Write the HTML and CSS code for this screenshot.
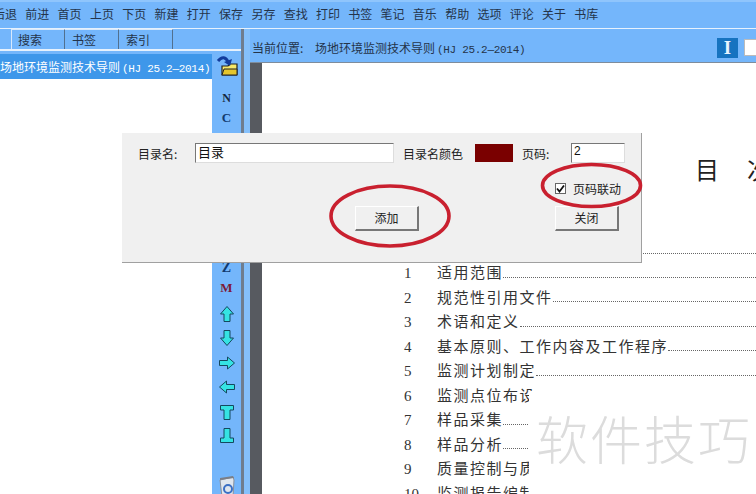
FILE: index.html
```html
<!DOCTYPE html>
<html lang="zh-CN">
<head>
<meta charset="utf-8">
<title>书签编辑</title>
<link rel="stylesheet" href="styles.css">
</head>
<body>
<div class="app">
  <nav class="toolbar">
    <span class="tool">后退</span><span class="tool">前进</span><span class="tool">首页</span><span class="tool">上页</span><span class="tool">下页</span><span class="tool">新建</span><span class="tool">打开</span><span class="tool">保存</span><span class="tool">另存</span><span class="tool">查找</span><span class="tool">打印</span><span class="tool">书签</span><span class="tool">笔记</span><span class="tool">音乐</span><span class="tool">帮助</span><span class="tool">选项</span><span class="tool">评论</span><span class="tool">关于</span><span class="tool">书库</span>
  </nav>
  <div class="main">
    <aside class="left">
      <div class="tabs">
        <span class="tab">搜索</span><span class="tab">书签</span><span class="tab">索引</span>
      </div>
      <div class="left-body">
        <div class="list">
          <div class="list-item">场地环境监测技术导则<span class="mono">(HJ 25.2—2014)</span></div>
        </div>
        <div class="side">
          <svg class="ico-open" width="22" height="22" viewBox="0 0 22 22"><path d="M6 11h6l2-2h7v11H6z" fill="#f6e86a" stroke="#222" stroke-width="1.2"/><path d="M6 20l2-6h13v6z" fill="#e4c52c" stroke="#222" stroke-width="1"/><path d="M2 6c4-5 8-4 10 1" fill="none" stroke="#123c9c" stroke-width="3"/><path d="M8 7l6 4 2-7z" fill="#123c9c"/></svg>
          <span class="letter letter-n">N</span>
          <span class="letter">C</span>
          <span class="letter letter-z">Z</span>
          <span class="letter letter-m">M</span>
          <svg class="arrow arrow-first" width="18" height="18" viewBox="0 0 18 18"><path d="M9 1.500l6.500 7.500h-3.500v7.500H6V9H2.500z" fill="#35e3e3" stroke="#14495f"/></svg>
          <svg class="arrow" width="18" height="18" viewBox="0 0 18 18"><path d="M9 16.500l6.500-7.500h-3.500V1.500H6V9H2.500z" fill="#35e3e3" stroke="#14495f"/></svg>
          <svg class="arrow" width="18" height="18" viewBox="0 0 18 18"><path d="M16.500 9L9.500 3v3.500h-8v5h8V15z" fill="#35e3e3" stroke="#14495f"/></svg>
          <svg class="arrow" width="18" height="18" viewBox="0 0 18 18"><path d="M1.500 9l7-6v3.500h8v5h-8V15z" fill="#35e3e3" stroke="#14495f"/></svg>
          <svg class="arrow" width="18" height="18" viewBox="0 0 18 18"><path d="M2.500 2.500h13v4.500H12v9.500H6V7H2.500z" fill="#35e3e3" stroke="#14495f"/></svg>
          <svg class="arrow" width="18" height="18" viewBox="0 0 18 18"><path d="M2.500 15.500h13V11H12V1.500H6V11H2.500z" fill="#35e3e3" stroke="#14495f"/></svg>
          <svg class="trash" width="20" height="22" viewBox="0 0 20 22"><path d="M3 5l13-3 1 3-1 17H5z" fill="#dfe6ee" stroke="#8b8f98"/><path d="M3 5l14-2-1-2L3 3z" fill="#7b7f88"/><circle cx="11" cy="14" r="4" fill="none" stroke="#3b6fc4" stroke-width="2"/></svg>
        </div>
      </div>
    </aside>
    <div class="splitter"></div>
    <section class="right">
      <div class="pathbar">
        <span class="path-label">当前位置:</span>
        <span class="path-value">场地环境监测技术导则<span class="mono">(HJ 25.2—2014)</span></span>
        <span class="i-btn">I</span>
        <span class="page-input"></span>
      </div>
      <div class="viewer">
        <div class="gutter"></div>
        <div class="page">
          <h1 class="doc-title">目&emsp;次</h1>
          <div class="rule"></div>
          <div class="toc-row"><span class="num">1</span><span class="name">适用范围</span><span class="dots"></span></div>
          <div class="toc-row"><span class="num">2</span><span class="name">规范性引用文件</span><span class="dots"></span></div>
          <div class="toc-row"><span class="num">3</span><span class="name">术语和定义</span><span class="dots"></span></div>
          <div class="toc-row"><span class="num">4</span><span class="name">基本原则、工作内容及工作程序</span><span class="dots"></span></div>
          <div class="toc-row"><span class="num">5</span><span class="name">监测计划制定</span><span class="dots"></span></div>
          <div class="toc-row"><span class="num">6</span><span class="name">监测点位布设</span><span class="dots"></span></div>
          <div class="toc-row"><span class="num">7</span><span class="name">样品采集</span><span class="dots"></span></div>
          <div class="toc-row"><span class="num">8</span><span class="name">样品分析</span><span class="dots"></span></div>
          <div class="toc-row"><span class="num">9</span><span class="name">质量控制与质量保证</span><span class="dots"></span></div>
          <div class="toc-row"><span class="num">10</span><span class="name">监测报告编制</span><span class="dots"></span></div>
        </div>
      </div>
    </section>
  </div>

  <div class="watermark">软件技巧</div>

  <div class="dialog">
    <div class="dlg-row">
      <label class="dlg-label dlg-name">目录名:</label>
      <span class="input input-name">目录</span>
      <label class="dlg-label dlg-color">目录名颜色</label>
      <span class="swatch"></span>
      <label class="dlg-label dlg-page">页码:</label>
      <span class="input input-page">2</span>
    </div>
    <div class="dlg-check">
      <span class="checkbox">
        <svg width="9" height="9" viewBox="0 0 9 9"><path d="M1 4.500l2.500 3L8 1.500" fill="none" stroke="#111" stroke-width="1.800"/></svg>
      </span>
      <span>页码联动</span>
    </div>
    <div class="dlg-buttons">
      <span class="btn btn-add">添加</span>
      <span class="btn">关闭</span>
    </div>
  </div>

  <svg class="ovals" width="756" height="494" viewBox="0 0 756 494">
    <ellipse cx="390" cy="216" rx="59" ry="30" fill="none" stroke="#c9202f" stroke-width="3.600"/>
    <ellipse cx="591.500" cy="185.500" rx="49" ry="21" fill="none" stroke="#c9202f" stroke-width="3.600"/>
  </svg>
</div>
</body>
</html>
```
FILE: styles.css
```css
* { box-sizing: border-box; }
html, body { margin: 0; padding: 0; }
body {
  width: 756px;
  height: 494px;
  overflow: hidden;
  font-family: "Noto Sans CJK SC", "Liberation Sans", sans-serif;
  color: #222;
  background: #74b6fb;
}
.app { position: relative; width: 756px; height: 494px; overflow: hidden; }
.mono { font-family: "Liberation Mono", monospace; font-size: 11px; letter-spacing: -0.3px; margin-left: 2px; }

.toolbar {
  height: 29px;
  display: flex;
  gap: 8.300px;
  padding: 5px 0 0 0;
  margin-left: -7px;
  width: 780px;
  border-bottom: 1px solid #e6f1fd;
  background: linear-gradient(#8fc5fc 0 2px, #74b6fb 2px);
  font-size: 12px;
  line-height: 18px;
  color: #24344a;
}
.tool { flex: none; width: 24px; white-space: nowrap; }

.main { display: flex; height: 465px; }
.left { width: 241px; flex: none; display: flex; flex-direction: column; }
.splitter { width: 9px; flex: none; background: #85c0fb; border-left: 3px solid #6f7d8e; }

.tabs {
  height: 22px;
  flex: none;
  display: flex;
  padding-left: 11px;
  border-bottom: 2px solid #e6f1fd;
}
.tab {
  width: 54px;
  height: 20px;
  border-top: 1px solid #d8e9fc;
  border-right: 1px solid #51708f;
  font-size: 12px;
  line-height: 19px;
  padding-left: 7px;
  color: #24344a;
}
.tab:first-child { border-left: 1px solid #d8e9fc; padding-left: 6px; }

.left-body { flex: 1; display: flex; padding-top: 3px; }
.list { width: 212px; flex: none; background: #fff; overflow: hidden; }
.list-item {
  height: 25px;
  background: #3e97ea;
  color: #fff;
  font-size: 12px;
  line-height: 25px;
  white-space: nowrap;
}
.side {
  width: 29px;
  flex: none;
  display: flex;
  flex-direction: column;
  align-items: center;
}
.ico-open { flex: none; margin-top: 1px; }
.letter {
  height: 20px;
  line-height: 20px;
  font-family: "Liberation Serif", serif;
  font-weight: 700;
  font-size: 13px;
  color: #123a6e;
}
.letter-n { margin-top: 11px; color: #14283f; font-size: 12px; }
.letter-z { margin-top: 130px; font-size: 14px; }
.letter-m { color: #7c1a38; }
.arrow { flex: none; margin-top: 6.400px; }
.arrow-first { margin-top: 7px; }
.trash { flex: none; margin-top: 30px; }

.right { flex: 1; min-width: 0; display: flex; flex-direction: column; }
.pathbar {
  height: 34px;
  flex: none;
  display: flex;
  align-items: center;
  padding: 4px 0 0 2px;
  border-bottom: 1px solid #7e8c9c;
  font-size: 12px;
  color: #24344a;
  white-space: nowrap;
}
.path-label { width: 55px; flex: none; }
.path-value { margin-left: 8px; width: 402px; flex: none; }
.i-btn {
  width: 21px;
  height: 20px;
  flex: none;
  background: #1673c0;
  color: #e8f4ff;
  font-family: "Liberation Serif", serif;
  font-weight: 700;
  font-size: 19px;
  line-height: 20px;
  text-align: center;
}
.page-input { width: 20px; height: 17px; margin-left: 6px; flex: none; background: #fff; border: 1px solid #bbb; }

.viewer { flex: 1; display: flex; min-height: 0; }
.gutter { width: 12px; flex: none; background: #575a60; }
.page { flex: 1; min-width: 0; background: #fff; overflow: hidden; font-size: 16px; color: #333; }
.doc-title {
  margin: 90px 0 0 433px;
  font-size: 24px;
  font-weight: 400;
  line-height: 32px;
  letter-spacing: 2px;
  white-space: nowrap;
  color: #222;
}
.rule { border-bottom: 1px dotted #666; height: 69px; }
.toc-row {
  display: flex;
  align-items: baseline;
  height: 24.500px;
  line-height: 24.500px;
  padding-left: 142px;
  white-space: nowrap;
}
.rule + .toc-row { margin-top: 6px; }
.num { width: 33px; flex: none; font-family: "Liberation Serif", serif; font-size: 15px; }
.name { flex: none; font-size: 15px; letter-spacing: 1.500px; }
.dots { flex: 1; border-bottom: 1px dotted #666; height: 1px; align-self: flex-end; margin-bottom: 7px; }

.watermark {
  position: absolute;
  left: 529px;
  top: 391px;
  width: 227px;
  height: 103px;
  padding: 13px 0 0 7px;
  background: #fff;
  color: #dcdcdc;
  font-size: 52px;
  font-weight: 300;
  line-height: 68px;
  letter-spacing: 2px;
  white-space: nowrap;
}

.dialog {
  position: absolute;
  left: 122px;
  top: 133px;
  width: 520px;
  height: 130px;
  background: #f0f0f0;
  border-right: 1px solid #a0a0a0;
  border-bottom: 1px solid #a0a0a0;
  font-size: 12px;
  color: #222;
}
.dlg-row { display: flex; align-items: center; height: 20px; margin-top: 10px; padding-left: 16px; }
.dlg-label { flex: none; white-space: nowrap; }
.dlg-name { width: 57px; }
.dlg-color { width: 72px; margin-left: 9px; }
.dlg-page { width: 49px; margin-left: 9px; }
.input {
  flex: none;
  height: 20px;
  background: #fff;
  border-top: 1px solid #777;
  border-left: 1px solid #777;
  border-right: 1px solid #ddd;
  border-bottom: 1px solid #ddd;
  color: #111;
  padding-left: 2px;
  line-height: 15px;
}
.input-name { width: 199px; font-size: 13px; }
.input-page { width: 54px; font-family: "Liberation Sans", sans-serif; font-size: 12px; }
.swatch { width: 38px; height: 18px; flex: none; background: #7a0000; }
.dlg-check {
  display: flex;
  align-items: center;
  justify-content: flex-end;
  gap: 7px;
  height: 18px;
  margin-top: 16px;
  padding-right: 20px;
  color: #222;
}
.checkbox {
  width: 11px;
  height: 11px;
  display: flex;
  align-items: center;
  justify-content: center;
  background: #fff;
  border: 1px solid #666;
}
.dlg-buttons { display: flex; justify-content: space-between; margin-top: 9px; padding: 0 22px 0 233px; }
.btn {
  width: 64px;
  height: 25px;
  text-align: center;
  line-height: 22px;
  background: #f0f0f0;
  border-top: 1px solid #fff;
  border-left: 1px solid #fff;
  border-right: 2px solid #777;
  border-bottom: 2px solid #777;
}

.ovals { position: absolute; left: 0; top: 0; pointer-events: none; }
```
